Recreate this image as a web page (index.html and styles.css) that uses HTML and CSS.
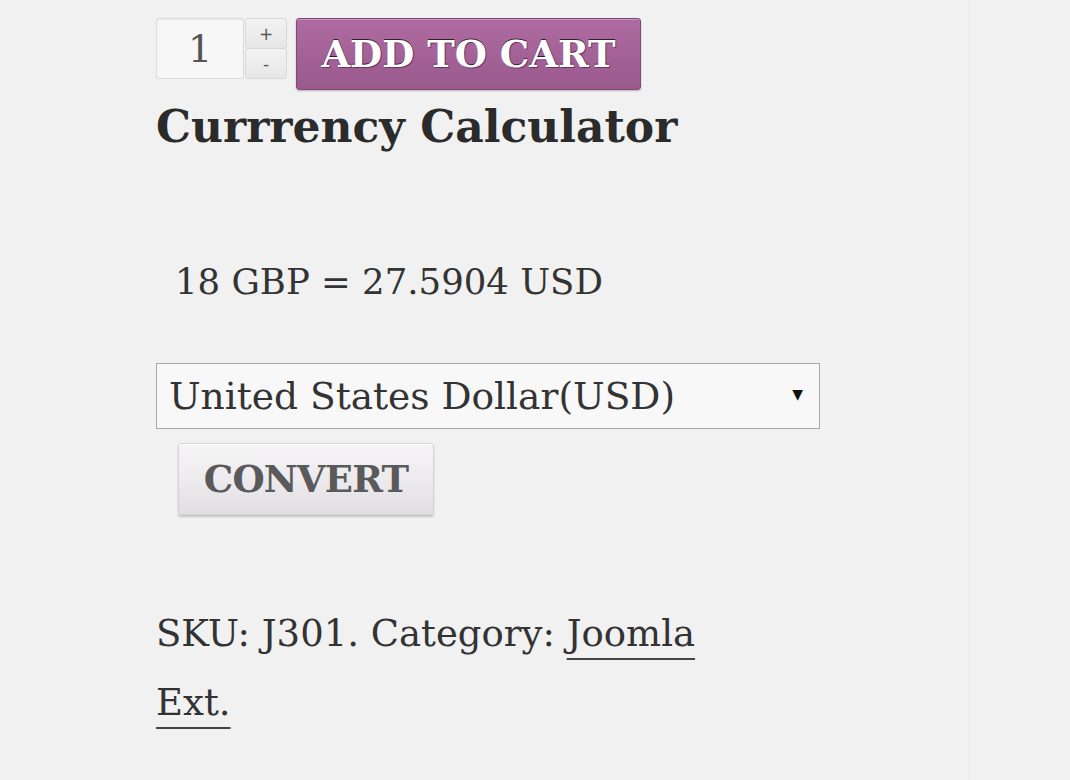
FILE: index.html
```html
<!DOCTYPE html>
<html>
<head>
<meta charset="utf-8">
<link rel="stylesheet" href="styles.css">
</head>
<body>
<div class="page">
  <main class="content">
    <form class="cart">
      <div class="qty">
        <div class="qty-value">1</div>
        <div class="qty-spin">
          <span class="spin spin-up">+</span>
          <span class="spin spin-down">-</span>
        </div>
      </div>
      <button type="button" class="add-btn">ADD TO CART</button>
    </form>
    <h2 class="calc-title">Currrency Calculator</h2>
    <p class="result">18 GBP = 27.5904 USD</p>
    <div class="select">
      <span class="select-text">United States Dollar(USD)</span>
      <span class="select-arrow">▼</span>
    </div>
    <button type="button" class="convert-btn">CONVERT</button>
    <p class="meta">SKU: J301. Category: <a class="cat-link" href="#">Joomla Ext.</a></p>
  </main>
  <aside class="side"></aside>
</div>
</body>
</html>
```
FILE: styles.css
```css
html, body {
  margin: 0;
  padding: 0;
  background: #f1f1f1;
}
body {
  font-family: "DejaVu Serif", "Liberation Serif", serif;
  color: #333;
  width: 1070px;
  height: 780px;
  overflow: hidden;
}
.page {
  display: flex;
  height: 780px;
}
.content {
  flex: none;
  width: 968px;
  padding: 18px 0 0 156px;
  box-sizing: border-box;
}
.side {
  flex: 1;
  border-left: 2px solid #ededed;
  background: #f2f2f2;
}
.cart {
  display: flex;
  align-items: flex-start;
  gap: 9px;
  margin: 0;
}
.qty {
  display: flex;
  gap: 1px;
}
.qty-value {
  width: 86px;
  height: 59px;
  border: 1px solid #dcdcdc;
  background: #f7f7f7;
  border-radius: 2px;
  font-size: 38px;
  color: #555;
  display: flex;
  align-items: center;
  justify-content: center;
  box-shadow: inset 0 1px 2px rgba(0,0,0,0.06);
}
.qty-spin {
  display: flex;
  flex-direction: column;
  width: 42px;
  height: 61px;
}
.spin {
  flex: 1;
  display: flex;
  align-items: center;
  justify-content: center;
  border: 1px solid #d8d8d8;
  background: linear-gradient(#f3f3f3, #e6e6e6);
  font-family: "DejaVu Sans", sans-serif;
  color: #555;
  font-size: 17px;
  border-radius: 3px;
}
.spin-down { margin-top: -1px; }
.add-btn {
  height: 72px;
  width: 345px;
  border: 1px solid #7f4a75;
  border-radius: 3px;
  background: linear-gradient(#ae6ba1, #9a5a8d);
  color: #fff;
  font-family: "DejaVu Serif", serif;
  font-weight: bold;
  font-size: 37px;
  text-shadow: 0 -1px 0 rgba(0,0,0,0.7), 1px 1px 0 rgba(80,20,70,0.6);
  box-shadow: inset 0 1px 0 rgba(255,255,255,0.3), 0 1px 2px rgba(0,0,0,0.25);
  padding: 0;
  margin: 0;
  cursor: pointer;
}
.calc-title {
  margin: 8px 0 0 0;
  font-size: 44px;
  line-height: 58px;
  font-weight: bold;
  color: #2b2b2b;
}
.result {
  margin: 102px 0 0 19px;
  font-size: 35.5px;
  line-height: 48px;
  color: #333;
}
.select {
  margin-top: 57px;
  width: 664px;
  height: 66px;
  box-sizing: border-box;
  border: 1px solid #a9a9a9;
  background: #f8f8f8;
  display: flex;
  align-items: center;
  justify-content: space-between;
  padding: 0 16px 0 12px;
}
.select-text {
  font-size: 37.5px;
  color: #333;
}
.select-arrow {
  font-family: "DejaVu Sans", sans-serif;
  font-size: 14px;
  color: #111;
  padding-bottom: 4px;
}
.convert-btn {
  display: block;
  margin: 14px 0 0 22px;
  width: 256px;
  height: 72px;
  border: 1px solid #d6d2d6;
  border-radius: 3px;
  background: linear-gradient(#f7f6f7, #e2dfe2);
  box-shadow: 0 2px 2px rgba(0,0,0,0.18), inset 0 1px 0 #fff;
  color: #5a5a5a;
  font-family: "DejaVu Serif", serif;
  font-weight: bold;
  font-size: 37px;
  letter-spacing: -0.8px;
  padding: 0;
}
.meta {
  width: 580px;
  margin: 84px 0 0 0;
  font-size: 37px;
  line-height: 69px;
  color: #333;
}
.cat-link {
  color: #333;
  text-decoration: underline;
  text-decoration-color: #444;
  text-decoration-thickness: 2px;
  text-underline-offset: 12px;
}
```
